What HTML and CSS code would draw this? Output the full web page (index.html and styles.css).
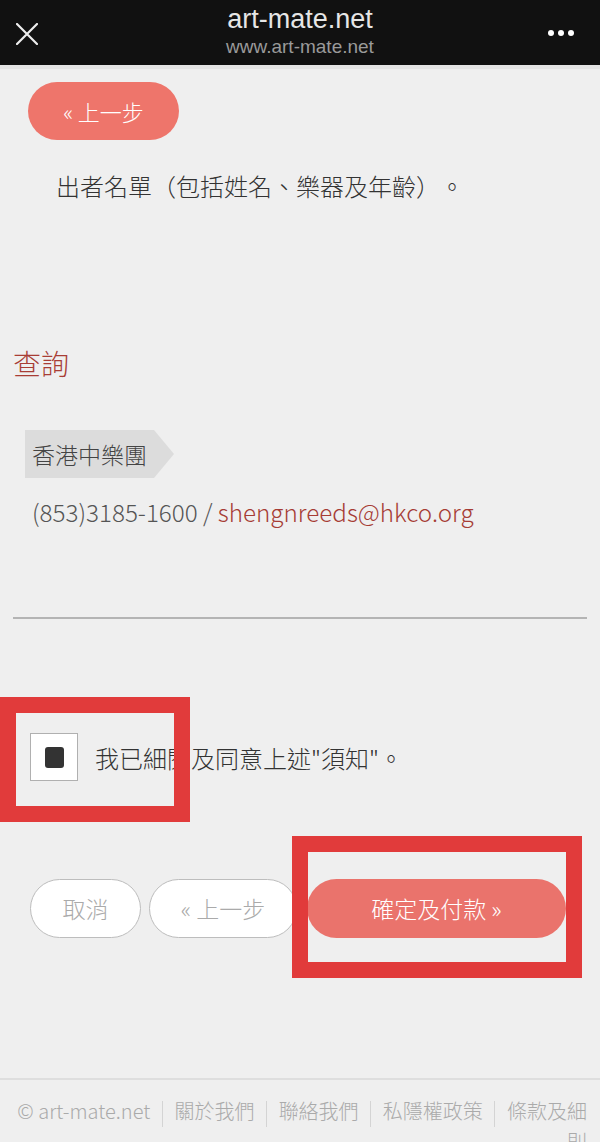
FILE: index.html
```html
<!DOCTYPE html>
<html>
<head>
<meta charset="UTF-8">
<title>art-mate.net</title>
<link rel="stylesheet" href="styles.css">
</head>
<body>
<div class="topbar">
  <svg class="close-icon" width="22" height="22" viewBox="0 0 22 22">
    <path d="M1 1 L21 21 M21 1 L1 21" stroke="#eee" stroke-width="2.2" stroke-linecap="round"/>
  </svg>
  <div class="site">
    <div class="site-name">art-mate.net</div>
    <div class="site-url">www.art-mate.net</div>
  </div>
  <div class="more"><span></span><span></span><span></span></div>
</div>

<div class="content">
  <a class="btn-prev" href="#">« 上一步</a>
  <p class="note">出者名單（包括姓名、樂器及年齡）。</p>

  <h2 class="enquiry">查詢</h2>
  <div class="org-tag">香港中樂團</div>
  <p class="contact">(853)3185-1600 / <a href="#">shengnreeds@hkco.org</a></p>

  <hr class="divider">

  <div class="agree">
    <div class="checkbox"><span></span></div>
    <label>我已細閱及同意上述"須知"。</label>
    <div class="annot annot-agree"></div>
  </div>

  <div class="actions">
    <a class="btn btn-cancel" href="#">取消</a>
    <a class="btn btn-back" href="#">« 上一步</a>
    <a class="btn btn-confirm" href="#">確定及付款 »</a>
    <div class="annot annot-confirm"></div>
  </div>
</div>

<div class="footer">
  © art-mate.net<span class="sep"></span>關於我們<span class="sep"></span>聯絡我們<span class="sep"></span>私隱權政策<span class="sep"></span>條款及細則
</div>
</body>
</html>
```

FILE: styles.css
```css
  body {
    margin: 0;
    padding: 0;
    background-color: #efefef;
    font-family: "Noto Sans CJK TC", "Noto Sans", sans-serif;
    font-weight: 300;
    color: #333;
    overflow: hidden;
    text-spacing-trim: space-all;
  }

  a {
    text-decoration: none;
  }

  /* browser bar */
  .topbar {
    height: 65px;
    background-color: #111;
    display: flex;
    align-items: center;
    justify-content: space-between;
    padding: 0 26px 0 16px;
    border-bottom: 4px solid #e4e4e4;
  }

  .close-icon {
    margin-top: 2px;
  }

  .site {
    text-align: center;
    font-family: "Liberation Sans", Arial, sans-serif;
    font-weight: normal;
    margin-left: 14px;
  }

  .site-name {
    font-size: 27px;
    line-height: 32px;
    color: #e6e6e6;
    margin-top: -3px;
  }

  .site-url {
    font-size: 19px;
    line-height: 24px;
    color: #9a9a9a;
  }

  .more {
    display: flex;
    gap: 4px;
  }

  .more span {
    width: 6px;
    height: 6px;
    border-radius: 50%;
    background-color: #fff;
  }

  /* page */
  .content {
    padding: 0 13px;
  }

  .btn-prev {
    display: inline-block;
    margin: 13px 0 0 15px;
    width: 151px;
    height: 58px;
    line-height: 58px;
    border-radius: 29px;
    background-color: #ee756b;
    color: #fff;
    font-size: 22px;
    text-align: center;
  }

  .note {
    margin: 29px 0 0 43px;
    font-size: 24px;
    line-height: 34px;
  }

  .enquiry {
    margin: 140px 0 0 0;
    font-size: 28px;
    line-height: 40px;
    font-weight: 300;
    color: #a83d35;
  }

  .org-tag {
    position: relative;
    display: inline-block;
    margin: 47px 0 0 12px;
    padding: 0 7px;
    height: 48px;
    line-height: 48px;
    background-color: #dcdcdc;
    font-size: 23px;
    color: #444;
  }

  .org-tag::after {
    content: "";
    position: absolute;
    right: -20px;
    top: 0;
    border-left: 20px solid #dcdcdc;
    border-top: 24px solid transparent;
    border-bottom: 24px solid transparent;
  }

  .contact {
    margin: 17px 0 0 19px;
    font-size: 24.2px;
    line-height: 34px;
    color: #555;
  }

  .contact a {
    color: #a63c35;
  }

  .divider {
    margin: 88px 0 0 0;
    border: none;
    border-top: 2px solid #b4b4b4;
  }

  .agree {
    position: relative;
    display: flex;
    align-items: center;
    margin: 114px 0 0 17px;
    font-size: 24px;
  }

  .checkbox {
    width: 46px;
    height: 46px;
    border: 1px solid #b0b0b0;
    background-color: #fff;
    display: flex;
    align-items: center;
    justify-content: center;
    margin-right: 17px;
  }

  .checkbox span {
    width: 19px;
    height: 21px;
    border-radius: 3px;
    background-color: #333;
  }

  .actions {
    position: relative;
    display: flex;
    gap: 8px;
    margin: 98px 0 0 17px;
  }

  .btn {
    height: 59px;
    line-height: 59px;
    border-radius: 30px;
    text-align: center;
    font-size: 23px;
    box-sizing: border-box;
  }

  .btn-cancel,
  .btn-back {
    background-color: #fff;
    border: 1px solid #bdbdbd;
    color: #aaa;
    line-height: 57px;
  }

  .btn-cancel {
    width: 111px;
  }

  .btn-back {
    width: 148px;
  }

  .btn-confirm {
    width: 259px;
    margin-left: 2px;
    background-color: #ea736c;
    color: #fff;
  }

  /* red marks drawn over the screenshot */
  .annot {
    position: absolute;
    border: 16px solid #e13b3b;
    box-sizing: border-box;
  }

  .annot-agree {
    left: -30px;
    top: -36px;
    width: 190px;
    height: 125px;
  }

  .annot-confirm {
    left: 262px;
    top: -43px;
    width: 290px;
    height: 142px;
  }

  .footer {
    margin-top: 140px;
    border-top: 2px solid #dedede;
    padding: 16px 13px 0 5px;
    text-align: right;
    font-size: 20px;
    line-height: 30px;
    color: #aaa;
  }

  .sep {
    display: inline-block;
    width: 1px;
    height: 26px;
    background-color: #d4d4d4;
    vertical-align: middle;
    margin: 0 11.6px;
  }
```
